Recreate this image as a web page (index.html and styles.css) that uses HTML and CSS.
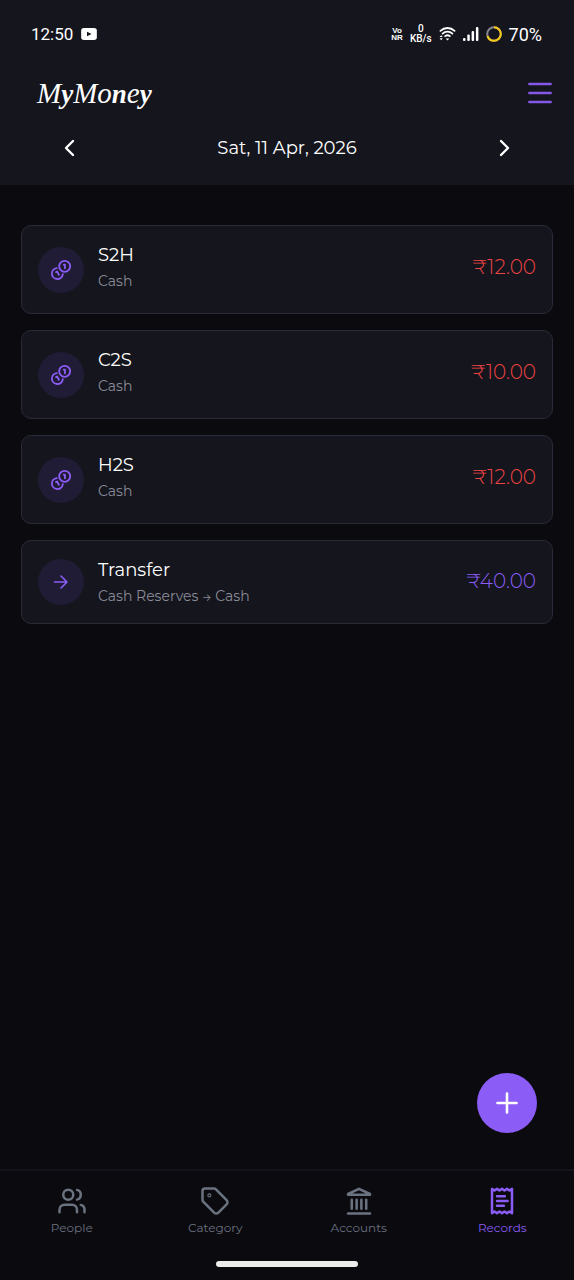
FILE: index.html
```html
<!DOCTYPE html>
<html lang="en">
<head>
<meta charset="utf-8">
<meta name="viewport" content="width=device-width, initial-scale=1">
<title>MyMoney</title>
<link rel="stylesheet" href="styles.css">
</head>
<body>
<svg class="sprite" aria-hidden="true">
  <symbol id="coins" viewBox="0 0 24 24">
    <circle cx="16" cy="8" r="6"/>
    <path d="M7.4 9.9A6 6 0 1 0 14 16.6"/>
    <path d="M15 6.2h1.300v3.900"/>
    <path d="M6.600 14.300l1.200-.6 1.900 3.500"/>
  </symbol>
</svg>
<header class="header">
  <div class="status">
    <div class="status-group">
      <span class="clock">12:50</span>
      <svg class="video" viewBox="0 0 17 13"><rect width="17" height="13" rx="3" fill="#fff"/><path d="M6.300 4v5l5-2.500z" fill="#14151d"/></svg>
    </div>
    <div class="status-group status-right">
      <span class="vonr">Vo<br>NR</span>
      <span class="speed"><span>0</span><span>KB/s</span></span>
      <svg class="wifi" viewBox="0 0 18 16" stroke="#fff" stroke-width="1.900">
        <path d="M1.500 4.600a11 11 0 0 1 15 0M3.800 7.600a7.500 7.500 0 0 1 10.400 0M6.500 10.300a4 4 0 0 1 5 0"/>
        <path d="M9 15l-1.900-2.300h3.800z" fill="#fff" stroke="none"/>
        <path d="M2.300 9.300l1.700 2H.6zM2.300 14.500l1.700-2H.6z" fill="#fff" stroke="none"/>
      </svg>
      <svg class="signal" viewBox="0 0 16 14"><g fill="#fff"><rect x="0" y="11" width="2.500" height="3" rx="1"/><rect x="4.300" y="7.500" width="2.500" height="6.500" rx="1"/><rect x="8.600" y="4" width="2.500" height="10" rx="1"/><rect x="12.900" y="0" width="2.500" height="14" rx="1"/></g></svg>
      <svg class="battery" viewBox="0 0 16 16" stroke-width="2"><circle cx="8" cy="8" r="6.800" stroke="#858690"/><circle class="charge" cx="8" cy="8" r="6.800" stroke="#f7c815" pathLength="100" stroke-dasharray="70 30" transform="rotate(-90 8 8)"/></svg>
      <span class="percent">70%</span>
    </div>
  </div>
  <div class="brand">
    <h1 class="logo">M<b>y</b>Mo<b>n</b>e<b>y</b></h1>
    <button class="menu" aria-label="Menu"><svg viewBox="0 0 24 22"><path d="M1.300 2h21.400M1.300 11h21.400M1.300 20h21.400"/></svg></button>
  </div>
  <div class="datebar">
    <button class="step" aria-label="Previous day"><svg viewBox="0 0 12 18"><path d="M10 2L3 9l7 7"/></svg></button>
    <span class="date">Sat, 11 Apr, 2026</span>
    <button class="step" aria-label="Next day"><svg viewBox="0 0 12 18"><path d="M2 2l7 7-7 7"/></svg></button>
  </div>
</header>
<main class="records">
  <article class="card">
    <div class="badge"><svg class="coins"><use href="#coins"/></svg></div>
    <div class="info"><h2 class="title">S2H</h2><p class="sub">Cash</p></div>
    <span class="amount">₹12.00</span>
  </article>
  <article class="card">
    <div class="badge"><svg class="coins"><use href="#coins"/></svg></div>
    <div class="info"><h2 class="title">C2S</h2><p class="sub">Cash</p></div>
    <span class="amount">₹10.00</span>
  </article>
  <article class="card">
    <div class="badge"><svg class="coins"><use href="#coins"/></svg></div>
    <div class="info"><h2 class="title">H2S</h2><p class="sub">Cash</p></div>
    <span class="amount">₹12.00</span>
  </article>
  <article class="card transfer">
    <div class="badge"><svg class="arrow" viewBox="0 0 16 16"><path d="M1.500 8h12.500M8 2l6 6-6 6"/></svg></div>
    <div class="info"><h2 class="title">Transfer</h2><p class="sub">Cash Reserves <span class="to">→</span> Cash</p></div>
    <span class="amount">₹40.00</span>
  </article>
</main>
<button class="add" aria-label="Add record"><svg viewBox="0 0 22 22"><path d="M11 1.500v19M1.500 11h19"/></svg></button>
<footer class="footer">
  <nav class="nav">
    <a class="tab" href="#people">
      <svg viewBox="0 0 24 24"><path d="M16 21v-2a4 4 0 0 0-4-4H6a4 4 0 0 0-4 4v2"/><circle cx="9" cy="7" r="4"/><path d="M22 21v-2a4 4 0 0 0-3-3.870M16 3.130a4 4 0 0 1 0 7.750"/></svg>
      <span>People</span>
    </a>
    <a class="tab" href="#category">
      <svg viewBox="0 0 24 24"><path d="M12.586 2.586A2 2 0 0 0 11.172 2H4a2 2 0 0 0-2 2v7.172a2 2 0 0 0 .586 1.414l8.704 8.704a2.426 2.426 0 0 0 3.420 0l6.580-6.580a2.426 2.426 0 0 0 0-3.420z"/><circle cx="7.500" cy="7.500" r="1.200" stroke-width=".9"/></svg>
      <span>Category</span>
    </a>
    <a class="tab" href="#accounts">
      <svg viewBox="0 0 24 24"><path d="M3.200 22h17.600M3.200 7h17.600v-.6L12 2.300 3.200 6.400zM6.200 11v7.200M10.100 11v7.200M13.900 11v7.200M17.800 11v7.200"/></svg>
      <span>Accounts</span>
    </a>
    <a class="tab active" href="#records" aria-current="page">
      <svg viewBox="0 0 24 24"><path d="M4 2.300l2 1.300 2-1.300 2 1.300 2-1.300 2 1.300 2-1.300 2 1.300 2-1.300v19.400l-2-1.300-2 1.300-2-1.300-2 1.300-2-1.300-2 1.300-2-1.300-2 1.300zM8 8.200h6.300M8 12h8.500M8 15.800h5.500"/></svg>
      <span>Records</span>
    </a>
  </nav>
  <div class="home"></div>
</footer>
</body>
</html>
```
FILE: styles.css
```css
* { box-sizing: border-box; margin: 0; padding: 0; }

body {
  min-height: 100vh;
  display: flex;
  flex-direction: column;
  background: #0a0a0f;
  color: #fff;
  font-family: Montserrat, Inter, sans-serif;
}

svg { display: block; fill: none; stroke-linecap: round; stroke-linejoin: round; }
button { border: 0; background: none; color: inherit; cursor: pointer; }
.sprite { position: absolute; width: 0; height: 0; }

.header { padding-bottom: 7px; background: #14151d; }

.status {
  height: 68px;
  padding: 0 32px 0 31px;
  display: flex;
  align-items: center;
  justify-content: space-between;
  font-family: Roboto, sans-serif;
  font-size: 18px;
}
.status-group { display: flex; align-items: center; gap: 8px; }
.clock { font-size: 17px; }
.video { width: 16px; height: 12px; }
.vonr { font-family: "Liberation Sans", sans-serif; font-size: 8px; line-height: 7px; font-weight: 700; text-align: center; }
.speed { display: flex; flex-direction: column; align-items: center; font-size: 10px; line-height: 10px; font-weight: 500; }
.status-right { gap: 7px; }
.wifi { width: 17px; height: 16px; }
.signal { width: 16px; height: 14px; }
.battery { width: 16px; height: 16px; }
.charge { stroke-linecap: butt; }

.brand {
  height: 50px;
  padding: 0 22px 0 37px;
  display: flex;
  align-items: center;
  justify-content: space-between;
}
.logo {
  font-family: "Liberation Serif", serif;
  font-size: 29px;
  line-height: 50px;
  font-style: italic;
  font-weight: 400;
}
.logo b { font-size: 27px; }
.menu svg { width: 24px; height: 22px; stroke: #8458e8; stroke-width: 2.400; }

.datebar {
  height: 60px;
  padding: 0 63px;
  display: flex;
  align-items: center;
  justify-content: space-between;
}
.date { font-size: 18px; }
.step svg { width: 12px; height: 18px; stroke: #fff; stroke-width: 2.400; }

.records {
  flex: 1;
  padding: 40px 21px;
  display: flex;
  flex-direction: column;
  gap: 16px;
}
.card {
  display: flex;
  align-items: flex-start;
  gap: 14px;
  padding: 15px 16px 20px;
  border: 1px solid #2a2a38;
  border-radius: 10px;
  background: #14151d;
}
.transfer { padding-bottom: 15px; }
.badge {
  width: 46px;
  height: 46px;
  align-self: flex-end;
  display: grid;
  place-items: center;
  border-radius: 50%;
  background: #211c35;
  stroke: #8b5cf6;
}
.transfer .badge { align-self: center; }
.coins { width: 22px; height: 22px; stroke-width: 2; }
.arrow { width: 16px; height: 16px; stroke-width: 1.600; }
.info { flex: 1; }
.title { font-size: 18px; line-height: 28px; font-weight: 400; }
.sub { font-size: 14px; line-height: 24px; color: #8b8c98; }
.to { font-family: Inter, sans-serif; font-size: 10px; line-height: 1; }
.amount { font-size: 20px; line-height: 52px; font-weight: 300; color: #ef4444; }
.transfer .amount { line-height: 50px; color: #8b5cf6; }

.add {
  position: fixed;
  right: 37px;
  bottom: 147px;
  width: 60px;
  height: 60px;
  display: grid;
  place-items: center;
  border-radius: 50%;
  background: #8b5cf6;
}
.add svg { width: 22px; height: 22px; stroke: #fff; stroke-width: 2.600; }

.footer { border-top: 2px solid #14151c; padding: 15px 0 13px; }
.nav { display: grid; grid-template-columns: repeat(4, 1fr); }
.tab {
  display: flex;
  flex-direction: column;
  align-items: center;
  gap: 4px;
  color: #6b7280;
  font-size: 12px;
  line-height: 16px;
  text-decoration: none;
}
.tab svg { width: 30px; height: 30px; stroke: currentColor; stroke-width: 2; }
.active { color: #8b5cf6; }
.home { width: 142px; height: 6px; margin: 25px auto 0; border-radius: 3px; background: #ececec; }
```
